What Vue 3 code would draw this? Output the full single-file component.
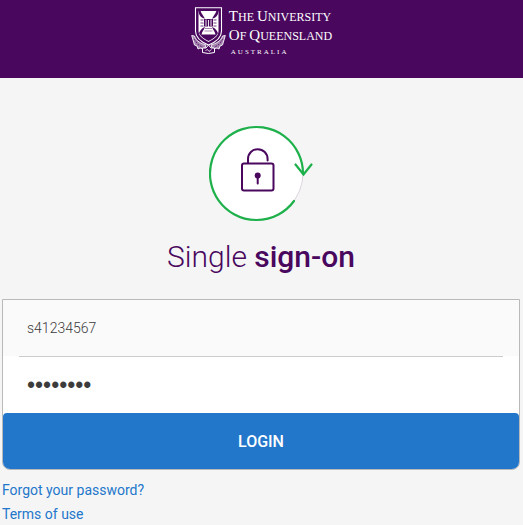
<template>
  <div class="page">
    <header class="masthead">
      <a class="brand" href="#" aria-label="The University of Queensland Australia">
        <svg class="crest" viewBox="0 0 36 48" width="36" height="48" fill="none" stroke="#fff">
          <path d="M4.500 .7H30.500V24C30.500 31 25 35 17.500 38C10 35 4.500 31 4.500 24Z" stroke-width="1.100" />
          <path d="M7.500 4H27.500V24C27.500 29 23 32 17.500 35C12 32 7.500 29 7.500 24Z" fill="#fff" stroke="none" />
          <g fill="#49075e" stroke="none">
            <path d="M7.300 3.800H9.500C10.500 7 12.500 9 14 11.500C12 11.500 9.500 10 8.300 7.500Z" />
            <path d="M27.700 3.800H25.500C24.500 7 22.500 9 21 11.500C23 11.500 25.500 10 26.700 7.500Z" />
            <path d="M8 26C9.500 22.500 11.500 21 14 20C13 23 11 24.500 10.500 27.500H24.500C24 24.500 22 23 21 20C23.500 21 25.500 22.500 27 26C25 30 21.500 32 17.500 34C13.500 32 10 30 8 26Z" />
            <path d="M13 12H22V19.500H13Z" />
          </g>
          <path d="M15 12.500V19M17.500 13V20M20 12.500V19" stroke-width=".9" />
          <path d="M9.500 13H12.500M9.500 16H12.500M9.500 19H12.500M22.500 13H25.500M22.500 16H25.500M22.500 19H25.500" stroke="#49075e" stroke-width=".8" />
          <path d="M14 21.500H21M13.500 24H21.500" stroke="#49075e" stroke-width=".5" />
          <path d="M.7 28.500L3.500 29C5 34 10 36.500 15 38L13.500 42L9 41L7 42L6 39L3.500 38Z" fill="#fff" fill-opacity=".5" stroke-width=".9" />
          <path d="M34.300 28.500L31.500 29C30 34 25 36.500 20 38L21.500 42L26 41L28 42L29 39L31.500 38Z" fill="#fff" fill-opacity=".5" stroke-width=".9" />
          <path d="M3 32L7 37.500L12 40.500M32 32L28 37.500L23 40.500" stroke="#49075e" stroke-width=".8" stroke-dasharray="2 1" />
          <path d="M11.500 41H15L17.500 38L20 41H23.500V45.500L17.500 46.500L11.500 45.500Z" fill="#49075e" stroke-width="1" />
          <path d="M14.500 43.500L16.500 42.500L18 44.500L20.500 42.500" stroke-width=".8" />
        </svg>
        <span class="wordmark">
          <span class="wordmark-line"><b>T</b>HE <b>U</b>NIVERSITY</span>
          <span class="wordmark-line"><b>O</b>F <b>Q</b>UEENSLAND</span>
          <span class="wordmark-country">AUSTRALIA</span>
        </span>
      </a>
    </header>

    <main class="content">
      <svg class="lock" viewBox="0 0 104 98" width="104" height="98" fill="none" stroke-linecap="round" aria-hidden="true">
        <circle cx="47.500" cy="48.500" r="46.500" fill="#fff" stroke="#ddd3e0" stroke-width="1" />
        <path d="M85 76A46.500 46.500 0 1 1 94 49" stroke="#1eb14b" stroke-width="2.200" />
        <path d="M86.500 39.500L94.500 49.500L102.500 39.500" stroke="#1eb14b" stroke-width="2.200" />
        <rect x="33" y="38.500" width="31.500" height="27" rx="2" stroke="#49075e" stroke-width="2" />
        <path d="M39 38V34A9.800 9.800 0 0 1 58.600 34V35.500" stroke="#49075e" stroke-width="2" />
        <circle cx="48.700" cy="50.500" r="3" fill="#49075e" />
        <path d="M48.700 51V58.500" stroke="#49075e" stroke-width="2" />
      </svg>

      <h1 class="title">Single <strong>sign-on</strong></h1>

      <form class="login" @submit.prevent>
        <div class="field field-username">
          <input v-model="username" type="text" aria-label="Username" autocomplete="username" />
        </div>
        <div class="field field-password">
          <input v-model="password" type="password" aria-label="Password" autocomplete="current-password" />
        </div>
        <button type="submit" class="login-btn">LOGIN</button>
      </form>

      <nav class="links">
        <a href="#">Forgot your password?</a>
        <a href="#">Terms of use</a>
      </nav>
    </main>
  </div>
</template>

<script setup>
import { ref } from 'vue'

const username = ref('s41234567')
const password = ref('password')
</script>

<style>
body {
  margin: 0;
  background: #f5f5f5;
}
</style>

<style scoped>
.page {
  font-family: Roboto, "Liberation Sans", sans-serif;
  background: #f5f5f5;
}
.masthead {
  display: flex;
  justify-content: center;
  box-sizing: border-box;
  height: 78px;
  padding-top: 7px;
  background: #49075e;
}
.brand {
  display: flex;
  align-items: flex-start;
  gap: 2px;
  height: 48px;
  color: #fff;
  text-decoration: none;
}
.wordmark {
  display: flex;
  flex-direction: column;
  font-family: "Liberation Serif", serif;
}
.wordmark-line {
  font-size: 12px;
  line-height: 18px;
  white-space: nowrap;
}
.wordmark-line b {
  font-size: 15px;
  font-weight: 400;
}
.wordmark-country {
  padding: 3px 0 0 2px;
  font-size: 7px;
  line-height: 8px;
  letter-spacing: 2px;
}
.content {
  display: flex;
  flex-direction: column;
  padding: 47px 3px 0 2px;
}
.lock {
  align-self: center;
}
.title {
  margin: 14px 0 0;
  color: #49075e;
  font-size: 30px;
  font-weight: 300;
  line-height: 40px;
  text-align: center;
}
.title strong {
  font-weight: 500;
}
.login {
  display: flex;
  flex-direction: column;
  margin-top: 22px;
  border: 1px solid #b9b9b9;
  border-radius: 0 0 8px 8px;
  background: #fff;
}
.field {
  padding: 0 16px;
}
.field-username {
  background: linear-gradient(#fafafa, #fafafa) top / 100% 56px no-repeat;
}
.field input {
  display: block;
  box-sizing: border-box;
  width: 100%;
  height: 56px;
  padding: 0 8px;
  border: 0;
  outline: 0;
  background: transparent;
  color: #3c3c3c;
  font-family: inherit;
  font-size: 14px;
  font-weight: 300;
}
.field-username input {
  height: 57px;
  border-bottom: 1px solid #ccc;
}
.field-password input {
  font-family: "Liberation Sans", sans-serif;
  font-size: 23px;
}
.login-btn {
  height: 56px;
  border: 0;
  border-radius: 4px 4px 7px 7px;
  background: #2377cb;
  color: #fff;
  font-family: inherit;
  font-size: 16px;
  font-weight: 500;
  cursor: pointer;
}
.links {
  display: flex;
  flex-direction: column;
  align-items: flex-start;
  margin-top: 8px;
}
.links a {
  color: #2377cb;
  font-size: 14px;
  line-height: 24px;
  text-decoration: none;
}
</style>
